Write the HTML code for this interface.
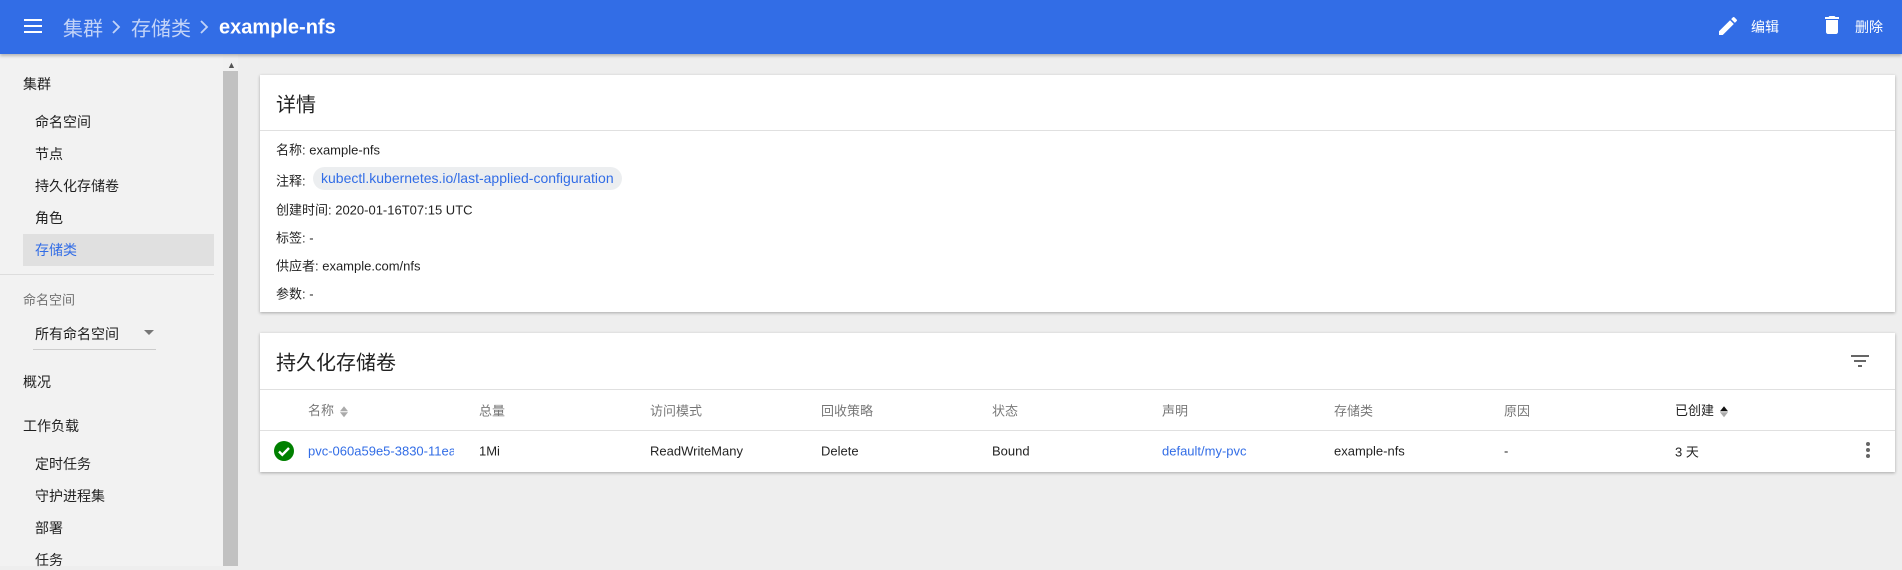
<!DOCTYPE html>
<html><head><meta charset="utf-8"><style>
*{box-sizing:border-box;margin:0;padding:0}
body{width:1902px;height:566px;overflow:hidden;background:#eeeeee;font-family:"Liberation Sans","Noto Sans CJK SC",sans-serif;font-size:14px;color:rgba(0,0,0,.87);position:relative}
.abs{position:absolute;white-space:nowrap}
.hdr{position:absolute;left:0;top:0;width:1902px;height:54px;background:#326de6;box-shadow:0 2px 3px rgba(0,0,0,.25);z-index:2}
.side{position:absolute;left:0;top:54px;width:223px;height:512px;background:#f2f2f2}
.sb{position:absolute;left:223px;top:54px;width:15px;height:512px;background:#f1f1f1}
.sbt{position:absolute;left:223px;top:71px;width:15px;height:495px;background:#c1c1c1}
.card{position:absolute;left:260px;width:1635px;background:#fff;box-shadow:0 1px 3px rgba(0,0,0,.3)}
.blue{color:#326de6}
.gray{color:rgba(0,0,0,.54)}
.v{transform:translateY(-50%)}
.sort{display:inline-block;width:10px;height:16px;position:relative;vertical-align:middle;margin-left:5px}
.sort:before{content:"";position:absolute;left:1px;top:-2px;border:4px solid transparent;border-bottom:5px solid var(--up)}
.sort:after{content:"";position:absolute;left:1px;top:8px;border:4px solid transparent;border-top:5px solid var(--dn)}
</style></head><body>
<div class="hdr">
 <div class="abs" style="left:24px;top:19px;width:18px;height:2px;background:#fff;box-shadow:0 6px 0 #fff,0 12px 0 #fff"></div>
 <div class="abs v" style="left:63px;top:27px;font-size:20px;color:rgba(255,255,255,.7)">集群</div>
 <svg class="abs" style="left:111px;top:20px" width="10" height="14" viewBox="0 0 10 14"><path d="M2 1l6 6-6 6" stroke="rgba(255,255,255,.7)" stroke-width="1.8" fill="none"/></svg>
 <div class="abs v" style="left:131px;top:27px;font-size:20px;color:rgba(255,255,255,.7)">存储类</div>
 <svg class="abs" style="left:199px;top:20px" width="10" height="14" viewBox="0 0 10 14"><path d="M2 1l6 6-6 6" stroke="rgba(255,255,255,.7)" stroke-width="1.8" fill="none"/></svg>
 <div class="abs v" style="left:219px;top:28px;font-size:20px;font-weight:bold;color:#fff">example-nfs</div>
 <svg class="abs" style="left:1716px;top:14px" width="24" height="24" viewBox="0 0 24 24"><path fill="#fff" d="M3 17.25V21h3.75L17.81 9.94l-3.75-3.75L3 17.25zM20.71 7.04a1 1 0 0 0 0-1.41l-2.34-2.34a1 1 0 0 0-1.41 0l-1.83 1.830 3.75 3.75 1.83-1.83z"/></svg>
 <div class="abs v" style="left:1751px;top:27px;font-size:14px;color:#fff">编辑</div>
 <svg class="abs" style="left:1820px;top:13px" width="24" height="24" viewBox="0 0 24 24"><path fill="#fff" d="M6 19c0 1.1.9 2 2 2h8c1.1 0 2-.9 2-2V7H6v12zM19 4h-3.5l-1-1h-5l-1 1H5v2h14V4z"/></svg>
 <div class="abs v" style="left:1855px;top:27px;font-size:14px;color:#fff">删除</div>
</div>
<div class="side">
 <div class="abs v" style="left:23px;top:30px;font-size:14px">集群</div>
 <div class="abs v" style="left:35px;top:68px">命名空间</div>
 <div class="abs v" style="left:35px;top:100px">节点</div>
 <div class="abs v" style="left:35px;top:132px">持久化存储卷</div>
 <div class="abs v" style="left:35px;top:164px">角色</div>
 <div class="abs" style="left:23px;top:180px;width:191px;height:32px;background:#e0e0e0"></div>
 <div class="abs v blue" style="left:35px;top:196px">存储类</div>
 <div class="abs" style="left:0;top:220px;width:214px;height:1px;background:#ddd"></div>
 <div class="abs v gray" style="left:23px;top:245px;font-size:13px">命名空间</div>
 <div class="abs v" style="left:35px;top:280px">所有命名空间</div>
 <div class="abs" style="left:144px;top:276px;border:5px solid transparent;border-top:5px solid #777"></div>
 <div class="abs" style="left:33px;top:295px;width:123px;height:1px;background:#ccc"></div>
 <div class="abs v" style="left:23px;top:328px">概况</div>
 <div class="abs v" style="left:23px;top:372px">工作负载</div>
 <div class="abs v" style="left:35px;top:410px">定时任务</div>
 <div class="abs v" style="left:35px;top:442px">守护进程集</div>
 <div class="abs v" style="left:35px;top:474px">部署</div>
 <div class="abs v" style="left:35px;top:506px">任务</div>
</div>
<div class="sb"></div><div class="sbt"></div>
<div class="abs" style="left:227px;top:60px;font-size:9px;color:#555">▲</div>
<div class="card" style="top:75px;height:237px">
 <div class="abs v" style="left:16px;top:28px;font-size:20px">详情</div>
 <div class="abs" style="left:0;top:55px;width:100%;height:1px;background:#e0e0e0"></div>
 <div class="abs v" style="left:16px;top:74px;font-size:13px">名称: example-nfs</div>
 <div class="abs v" style="left:16px;top:105px;font-size:13px">注释:</div>
 <div class="abs blue" style="left:53px;top:92px;height:23px;line-height:23px;padding:0 8px;background:#eceef0;border-radius:12px;font-size:14px">kubectl.kubernetes.io/last-applied-configuration</div>
 <div class="abs v" style="left:16px;top:134px;font-size:13px">创建时间: 2020-01-16T07:15 UTC</div>
 <div class="abs v" style="left:16px;top:162px;font-size:13px">标签: -</div>
 <div class="abs v" style="left:16px;top:190px;font-size:13px">供应者: example.com/nfs</div>
 <div class="abs v" style="left:16px;top:218px;font-size:13px">参数: -</div>
</div>
<div class="card" style="top:333px;height:139px">
 <div class="abs v" style="left:16px;top:28px;font-size:20px">持久化存储卷</div>
 <svg class="abs" style="left:1588px;top:16px" width="24" height="24" viewBox="0 0 24 24"><path fill="#666" d="M10 18h4v-2h-4v2zM3 6v2h18V6H3zm3 7h12v-2H6v2z"/></svg>
 <div class="abs" style="left:0;top:56px;width:100%;height:1px;background:#e0e0e0"></div>
 <div class="abs v gray" style="left:48px;top:77px;font-size:13px">名称<span class="sort" style="--up:#aaa;--dn:#aaa"></span></div>
 <div class="abs v gray" style="left:219px;top:77px;font-size:13px">总量</div>
 <div class="abs v gray" style="left:390px;top:77px;font-size:13px">访问模式</div>
 <div class="abs v gray" style="left:561px;top:77px;font-size:13px">回收策略</div>
 <div class="abs v gray" style="left:732px;top:77px;font-size:13px">状态</div>
 <div class="abs v gray" style="left:902px;top:77px;font-size:13px">声明</div>
 <div class="abs v gray" style="left:1074px;top:77px;font-size:13px">存储类</div>
 <div class="abs v gray" style="left:1244px;top:77px;font-size:13px">原因</div>
 <div class="abs v" style="left:1415px;top:77px;font-size:13px">已创建<span class="sort" style="--up:#111;--dn:#aaa"></span></div>
 <div class="abs" style="left:0;top:97px;width:100%;height:1px;background:#e0e0e0"></div>
 <svg class="abs" style="left:14px;top:108px" width="20" height="20" viewBox="0 0 20 20"><circle cx="10" cy="10" r="10" fill="#008000"/><path d="M5 10.5l3.3 3.3L15 7" stroke="#fff" stroke-width="2.4" fill="none"/></svg>
 <div class="abs v blue" style="left:48px;top:118px;font-size:13px;width:146px;overflow:hidden">pvc-060a59e5-3830-11ea</div>
 <div class="abs v" style="left:219px;top:118px;font-size:13px">1Mi</div>
 <div class="abs v" style="left:390px;top:118px;font-size:13px">ReadWriteMany</div>
 <div class="abs v" style="left:561px;top:118px;font-size:13px">Delete</div>
 <div class="abs v" style="left:732px;top:118px;font-size:13px">Bound</div>
 <div class="abs v blue" style="left:902px;top:118px;font-size:13px">default/my-pvc</div>
 <div class="abs v" style="left:1074px;top:118px;font-size:13px">example-nfs</div>
 <div class="abs v" style="left:1244px;top:118px;font-size:13px">-</div>
 <div class="abs v" style="left:1415px;top:118px;font-size:13px">3 天</div>
 <svg class="abs" style="left:1598px;top:107px" width="20" height="20" viewBox="0 0 20 20"><circle cx="10" cy="4" r="2" fill="#666"/><circle cx="10" cy="10" r="2" fill="#666"/><circle cx="10" cy="16" r="2" fill="#666"/></svg>
</div>
</body></html>
